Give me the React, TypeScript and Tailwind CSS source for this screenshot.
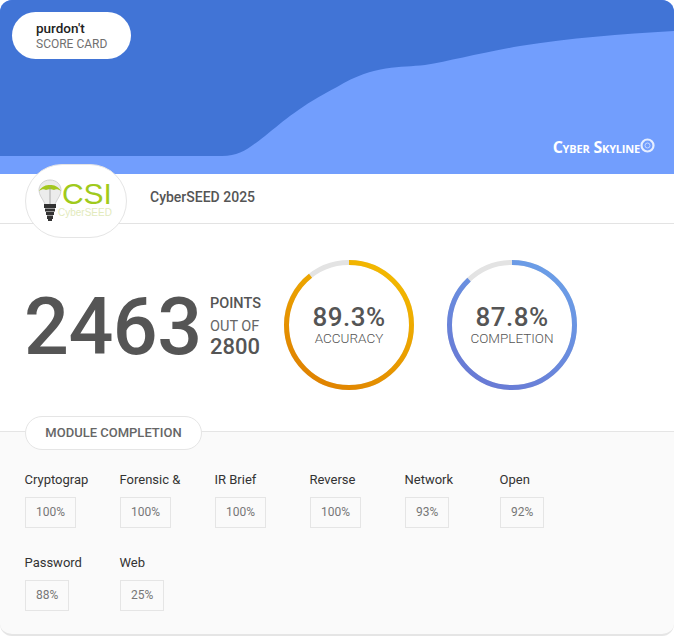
const modules = [
  { name: "Cryptograp", value: "100%" },
  { name: "Forensic &", value: "100%" },
  { name: "IR Brief", value: "100%" },
  { name: "Reverse", value: "100%" },
  { name: "Network", value: "93%" },
  { name: "Open", value: "92%" },
  { name: "Password", value: "88%" },
  { name: "Web", value: "25%" },
];

function Ring({ id, percent, label, from, to }: { id: string; percent: number; label: string; from: string; to: string }) {
  const r = 62.5;
  const circumference = 2 * Math.PI * r;
  return (
    <div className="relative w-[130px] h-[130px] flex flex-col items-center justify-center">
      <svg className="absolute inset-0" width="130" height="130" viewBox="0 0 130 130">
        <defs>
          {/* coordinates are in the circle's rotated space */}
          <linearGradient id={id} x1="1" y1="0.8" x2="0" y2="0.2">
            <stop offset="0" stopColor={from} />
            <stop offset="1" stopColor={to} />
          </linearGradient>
        </defs>
        <circle cx="65" cy="65" r={r} fill="none" stroke="#e3e3e3" strokeWidth="5" />
        <circle
          cx="65"
          cy="65"
          r={r}
          fill="none"
          stroke={"url(#" + id + ")"}
          strokeWidth="5"
          strokeDasharray={(circumference * percent) / 100 + " " + circumference}
          transform="rotate(-90 65 65)"
        />
      </svg>
      <div className="text-[26px] leading-[25px] font-medium tracking-[0.5px] text-[#555555]">{percent}%</div>
      <div className="text-[13.5px] leading-[16px] font-light text-[#555555]">{label}</div>
    </div>
  );
}

function Bulb() {
  return (
    <svg className="shrink-0" width="24" height="43" viewBox="0 0 24 43">
      <path d="M12 1C5 1 1 6 1 11c0 5 3 8 5 12l2 4h8l2-4c2-4 5-7 5-12 0-5-4-10-11-10z" fill="#ececec" stroke="#d2d2d2" strokeWidth="1" />
      <path d="M1 12C4 7 8 6 12 6s8 1 11 6c-3-2-5-2-7-1-2-1-6-1-8 0-2-1-4-1-7 1z" fill="#a3c81f" />
      <path d="M12 8v18" stroke="#9a9a9a" strokeWidth="0.8" />
      <path d="M6 25h12v4H6zM7 29.500h10v3H7zM8 33h8v3H8zM9 36.500h6v3.500H9zM10 40h4v2h-4z" fill="#333333" />
    </svg>
  );
}

export default function App() {
  return (
    <div className="w-[674px] h-[637px] bg-white font-['Roboto',sans-serif] text-[#555555]">
      <div className="relative h-[174px] bg-[#729efd] rounded-t-[12px] overflow-hidden">
        <svg className="absolute inset-0" width="674" height="174" viewBox="0 0 674 174">
          <path
            d="M0 0H674V31C620 34 570 38 520 46C480 53 450 61 425 65C400 68 375 64 337 87C300 106 285 120 265 136C248 149 240 156 222 156H0Z"
            fill="#4174d6"
          />
        </svg>
        <div className="relative flex">
          <div className="mt-[12px] ml-[12px] w-[119px] h-[47px] rounded-full bg-white pl-[24px] pt-[8px]">
            <div className="text-[13.5px] leading-[16px] font-medium text-[#222222]">purdon't</div>
            <div className="mt-[1px] text-[12px] leading-[15px] text-[#707070]">SCORE CARD</div>
          </div>
        </div>
        <div className="absolute right-[19px] top-[136px] flex items-center">
          <span className="mt-[1px] font-['Open_Sans',sans-serif] [font-variant:small-caps] text-[16px] leading-[20px] font-bold tracking-[-0.2px] text-white">Cyber Skyline</span>
          <svg className="-mt-[2px]" width="15" height="17" viewBox="0 0 15 17">
            <circle cx="7.500" cy="8.500" r="6" fill="none" stroke="#e6eeff" strokeWidth="2.200" />
            <circle cx="7.500" cy="8.500" r="2.500" fill="none" stroke="#c9d9ff" strokeWidth="1" />
          </svg>
        </div>
      </div>

      <div className="relative flex items-start h-[50px] border-b border-[#e3e3e3] pl-[25px]">
        <div className="-mt-[10px] w-[102px] h-[74px] shrink-0 rounded-[37px] bg-white border border-[#e5e5e5] flex items-start pl-[12px] pt-[14px]">
          <Bulb />
          <div className="flex flex-col items-end -ml-[4px] mt-[2px]">
            <span className="font-['Liberation_Sans',sans-serif] text-[30px] leading-[26px] text-[#a0ca1c]">CSI</span>
            <span className="font-['Liberation_Sans',sans-serif] text-[10px] leading-[11px] text-[#e2eabc]">CyberSEED</span>
          </div>
        </div>
        <div className="ml-[23px] mt-[14px] text-[14px] leading-[18px] font-medium text-[#555555]">CyberSEED 2025</div>
      </div>

      <div className="h-[207px] flex items-start pl-[25px] pt-[36px]">
        <div className="mt-[18px] w-[186px] text-[79px] leading-[98px] font-medium text-[#555555] -ml-[1px] tracking-[-0.5px]">2463</div>
        <div className="mt-[35px] w-[74px]">
          <div className="text-[14.5px] leading-[18px] font-medium text-[#555555]">POINTS</div>
          <div className="mt-[5px] text-[14.5px] leading-[17px] text-[#666666]">OUT OF</div>
          <div className="text-[22px] leading-[24px] font-medium text-[#555555]">2800</div>
        </div>
        <Ring id="accuracy" percent={89.3} label="ACCURACY" from="#f4bb00" to="#df8000" />
        <div className="w-[33px]" />
        <Ring id="completion" percent={87.8} label="COMPLETION" from="#6b9fe8" to="#6878d4" />
      </div>

      <div className="h-[205px] bg-[#fafafa] border-t border-b-2 border-[#e5e5e5] rounded-b-[12px] pl-[25px]">
        <div className="-mt-[16px] w-[177px] h-[34px] rounded-full bg-white border border-[#e5e5e5] flex items-center justify-center text-[13px] font-medium text-[#666666]">
          MODULE COMPLETION
        </div>
        <div className="mt-[21px] grid grid-cols-[repeat(6,95px)] gap-y-[25.5px]">
          {modules.map((m) => (
            <div key={m.name}>
              <div className="-ml-[0.5px] text-[13px] leading-[18px] text-[#333333]">{m.name}</div>
              <div className="mt-[8px] inline-block h-[31px] px-[10px] border border-[#e5e5e5] text-[12px] leading-[28px] text-[#777777]">
                {m.value}
              </div>
            </div>
          ))}
        </div>
      </div>
    </div>
  );
}
